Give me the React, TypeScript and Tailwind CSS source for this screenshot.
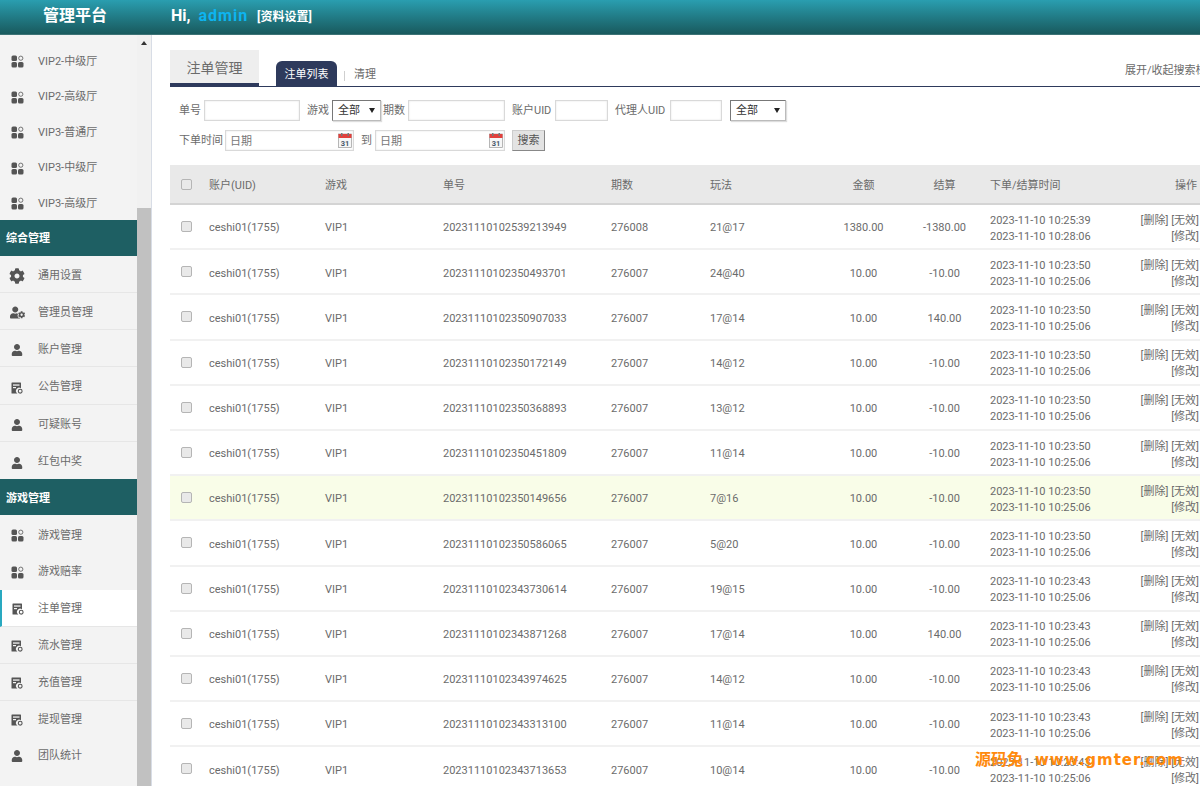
import { FaCog, FaUser, FaUserCog } from "react-icons/fa";

const font = "font-['Roboto','Noto_Sans_CJK_SC',sans-serif]";

function GridIcon() {
  return (
    <svg width="13" height="13" viewBox="0 0 13 13" className="text-[#555]">
      <rect x="0.5" y="0.5" width="5.5" height="5.5" rx="1.5" fill="currentColor" />
      <circle cx="9.8" cy="3.2" r="2.1" fill="none" stroke="currentColor" strokeWidth="0.8" />
      <rect x="0.5" y="7" width="5.5" height="5.5" rx="1.5" fill="currentColor" />
      <rect x="7" y="7" width="5.5" height="5.5" rx="1.5" fill="currentColor" />
    </svg>
  );
}

function DocIcon() {
  return (
    <svg width="12" height="12" viewBox="0 0 12 12" className="text-[#555]">
      <path d="M0.5 1a.5.5 0 0 1 .5-.5h8.5a.5.5 0 0 1 .5.5v5.2a3 3 0 0 0-3.6 5.3H1a.5.5 0 0 1-.5-.5z" fill="currentColor" />
      <rect x="2" y="2.4" width="6.5" height="1.3" fill="#f3f3f3" />
      <rect x="2" y="5" width="3" height="1.2" fill="#f3f3f3" />
      <circle cx="9.2" cy="9.2" r="1.9" fill="none" stroke="currentColor" strokeWidth="1.1" />
    </svg>
  );
}

function CalendarIcon() {
  return (
    <svg width="14" height="15" viewBox="0 0 14 15">
      <rect x="0.5" y="1" width="13" height="13.5" fill="#f6f6f6" stroke="#999" strokeWidth="0.7" />
      <rect x="0.5" y="1" width="13" height="4" fill="#e2403c" />
      <rect x="3" y="0" width="1.5" height="3" fill="#777" />
      <rect x="9.5" y="0" width="1.5" height="3" fill="#777" />
      <text x="7" y="12.6" textAnchor="middle" fontSize="7.5" fontWeight="700" fill="#46586a">31</text>
    </svg>
  );
}

type IconKind = "grid" | "doc" | "user" | "cog" | "admin";

function NavIcon({ kind }: { kind: IconKind }) {
  if (kind === "grid") return <GridIcon />;
  if (kind === "doc") return <DocIcon />;
  if (kind === "cog") return <FaCog className="text-[#555] text-[16px]" />;
  if (kind === "admin") return <FaUserCog className="text-[#555] text-[15px]" />;
  return <FaUser className="text-[#555] text-[12px]" />;
}

function NavItem({ label, icon, active, line = true, h = "h-[37.3px]", pt = "pt-[4px]" }: { label: string; icon: IconKind; active?: boolean; line?: boolean; h?: string; pt?: string }) {
  return (
    <div className={`${h} ${pt} flex items-center shrink-0 ${line ? "border-b border-[#e6e6e6]" : ""} ${active ? "bg-white border-l-2 border-l-[#29a9c0]" : ""}`}>
      <div className={`${active ? "w-[36px]" : "w-[38px]"} flex justify-center pr-[4px]`}>
        <NavIcon kind={icon} />
      </div>
      <span className="text-[11px] text-[#6b6b6b]">{label}</span>
    </div>
  );
}

function Section({ label }: { label: string }) {
  return (
    <div className="h-[36px] shrink-0 bg-[#1e5f63] text-white text-[11px] font-bold flex items-center pl-[6px] pt-[3px]">{label}</div>
  );
}

function Sidebar() {
  return (
    <div className="w-[152px] shrink-0 flex border-r border-[#d8dde6] h-full overflow-hidden">
      <div className="w-[137px] bg-[#f3f3f3] pt-[7px] flex flex-col h-full overflow-hidden">
        {["VIP2-中级厅", "VIP2-高级厅", "VIP3-普通厅", "VIP3-中级厅", "VIP3-高级厅"].map((t) => (
          <NavItem key={t} label={t} icon="grid" line={false} h="h-[35.5px]" />
        ))}
        <Section label="综合管理" />
        <NavItem label="通用设置" icon="cog" pt="pt-[5px]" />
        <NavItem label="管理员管理" icon="admin" />
        <NavItem label="账户管理" icon="user" />
        <NavItem label="公告管理" icon="doc" />
        <NavItem label="可疑账号" icon="user" />
        <NavItem label="红包中奖" icon="user" line={false} />
        <Section label="游戏管理" />
        <NavItem label="游戏管理" icon="grid" line={false} />
        <NavItem label="游戏赔率" icon="grid" line={false} pt="pt-[2px]" />
        <NavItem label="注单管理" icon="doc" active h="h-[37px]" pt="pt-[2px]" />
        <NavItem label="流水管理" icon="doc" h="h-[37px]" pt="pt-[2px]" />
        <NavItem label="充值管理" icon="doc" h="h-[37px]" pt="pt-[2px]" />
        <NavItem label="提现管理" icon="doc" line={false} h="h-[37px]" pt="pt-[2px]" />
        <NavItem label="团队统计" icon="user" line={false} h="h-[36px]" pt="pt-0" />
        <NavItem label="一级统计" icon="user" line={false} />
      </div>
      <div className="w-[14px] bg-[#f1f1f1] flex flex-col items-center h-full">
        <div className="h-[173px] w-full flex justify-center pt-[6px]">
          <div className="w-0 h-0 border-x-[3.5px] border-x-transparent border-b-[4px] border-b-[#333]" />
        </div>
        <div className="flex-1 w-full bg-[#c1c1c1]" />
      </div>
    </div>
  );
}

function Field({ w, placeholder }: { w: string; placeholder?: string }) {
  return (
    <input
      placeholder={placeholder}
      className={`${w} block h-[21px] border border-[#d9d9d9] shadow-[inset_0_0_2px_#e0e0e0] text-[11px] px-[4px] pt-[2px] outline-none placeholder:text-[#777] bg-white`}
    />
  );
}

function Select({ w }: { w: string }) {
  return (
    <div className={`${w} h-[21px] relative`}>
      <select className="block w-full h-full appearance-none border border-[#bbb] border-t-[#777] border-l-[#777] bg-white text-[11px] text-[#333] pl-[5px] pt-[2px] outline-none rounded-none shadow-[1px_1px_1px_#ddd]">
        <option>全部</option>
      </select>
      <div className="absolute right-[6px] top-[8px] w-0 h-0 border-x-[3px] border-x-transparent border-t-[5px] border-t-[#222]" />
    </div>
  );
}

function DateField({ w }: { w: string }) {
  return (
    <div className={`${w} h-[21px] relative`}>
      <Field w="w-full" placeholder="日期" />
      <div className="absolute right-[2px] top-[3px]">
        <CalendarIcon />
      </div>
    </div>
  );
}

function Label({ children, w }: { children: string; w: string }) {
  return <span className={`${w} shrink-0 pt-[2px] text-[11px] text-[#6b6b6b] whitespace-nowrap`}>{children}</span>;
}

const rows = [
  ["20231110102539213949", "276008", "21@17", "1380.00", "-1380.00", "2023-11-10 10:25:39", "2023-11-10 10:28:06"],
  ["20231110102350493701", "276007", "24@40", "10.00", "-10.00", "2023-11-10 10:23:50", "2023-11-10 10:25:06"],
  ["20231110102350907033", "276007", "17@14", "10.00", "140.00", "2023-11-10 10:23:50", "2023-11-10 10:25:06"],
  ["20231110102350172149", "276007", "14@12", "10.00", "-10.00", "2023-11-10 10:23:50", "2023-11-10 10:25:06"],
  ["20231110102350368893", "276007", "13@12", "10.00", "-10.00", "2023-11-10 10:23:50", "2023-11-10 10:25:06"],
  ["20231110102350451809", "276007", "11@14", "10.00", "-10.00", "2023-11-10 10:23:50", "2023-11-10 10:25:06"],
  ["20231110102350149656", "276007", "7@16", "10.00", "-10.00", "2023-11-10 10:23:50", "2023-11-10 10:25:06"],
  ["20231110102350586065", "276007", "5@20", "10.00", "-10.00", "2023-11-10 10:23:50", "2023-11-10 10:25:06"],
  ["20231110102343730614", "276007", "19@15", "10.00", "-10.00", "2023-11-10 10:23:43", "2023-11-10 10:25:06"],
  ["20231110102343871268", "276007", "17@14", "10.00", "140.00", "2023-11-10 10:23:43", "2023-11-10 10:25:06"],
  ["20231110102343974625", "276007", "14@12", "10.00", "-10.00", "2023-11-10 10:23:43", "2023-11-10 10:25:06"],
  ["20231110102343313100", "276007", "11@14", "10.00", "-10.00", "2023-11-10 10:23:43", "2023-11-10 10:25:06"],
  ["20231110102343713653", "276007", "10@14", "10.00", "-10.00", "2023-11-10 10:23:43", "2023-11-10 10:25:06"],
];

const cols = "grid grid-cols-[39px_116px_118px_168px_99px_113px_81px_81px_125px_90px] items-center";

function Check() {
  return <input type="checkbox" className="appearance-none block w-[11px] h-[11px] ml-[11px] -mt-[4px] border border-[#b5b5b5] rounded-[2px] bg-[#e9e9e9]" />;
}

function Table() {
  return (
    <div className="w-[1030px] mt-[14px] text-[11px] text-[#6b6b6b]">
      <div className={`${cols} h-[40px] pt-[4px] bg-[#e9e9e9] border-b-2 border-[#d4d4d4]`}>
        <Check />
        <span>账户(UID)</span>
        <span>游戏</span>
        <span>单号</span>
        <span>期数</span>
        <span>玩法</span>
        <span className="text-center">金额</span>
        <span className="text-center">结算</span>
        <span className="pl-[5px]">下单/结算时间</span>
        <span className="text-right pr-[3px]">操作</span>
      </div>
      {rows.map((r, i) => (
        <div key={r[0]} className={`${cols} h-[45.2px] pt-[4px] border-b-2 border-[#f1f1f1] ${i === 6 ? "bg-[#f9fde8]" : ""}`}>
          <Check />
          <span>ceshi01(1755)</span>
          <span>VIP1</span>
          <span>{r[0]}</span>
          <span>{r[1]}</span>
          <span>{r[2]}</span>
          <span className="text-center">{r[3]}</span>
          <span className="text-center">{r[4]}</span>
          <div className="pl-[5px] leading-[16px] whitespace-nowrap">
            <div>{r[5]}</div>
            <div>{r[6]}</div>
          </div>
          <div className="text-right leading-[16px] pr-[1px] whitespace-nowrap">
            <div>[删除] [无效]</div>
            <div>[修改]</div>
          </div>
        </div>
      ))}
    </div>
  );
}

export default function App() {
  return (
    <div className={`${font} w-[1200px] h-[786px] overflow-hidden flex flex-col bg-white relative`}>
      <header className="h-[35px] shrink-0 bg-gradient-to-b from-[#2a9eb0] to-[#195a5e] flex items-center text-white border-b border-[#3c7376] pb-[2px]">
        <div className="w-[150px] text-center text-[16px] font-bold">管理平台</div>
        <div className="ml-[21px] flex items-center">
          <span className="text-[16px] font-bold">Hi,</span>
          <span className="text-[16px] font-bold text-[#0db4f0] ml-[8px] tracking-[1px]">admin</span>
          <span className="text-[12px] font-bold ml-[9px] pt-[1px]">[资料设置]</span>
        </div>
      </header>
      <div className="flex flex-1 min-h-0">
        <Sidebar />
        <main className="flex-1 min-w-0 overflow-hidden pl-[18px] pt-[15px]">
          <div className="flex items-end h-[37px] w-[1048px] border-b border-[#2e3a5c] relative">
            <div className="w-[89px] h-full bg-[#eeeeee] border-b-[3px] border-[#2e3a5c] pt-[3px] text-[14px] text-[#6b6b6b] flex items-center justify-center">注单管理</div>
            <div className="ml-[17px] w-[61px] h-[25px] pt-[3px] bg-[#2e3a5c] rounded-t-[6px] text-white text-[11px] flex items-center justify-center">注单列表</div>
            <span className="ml-[7px] mb-[5px] h-[10px] w-px bg-[#cfcfcf]" />
            <span className="ml-[9px] mb-[3px] text-[11px] text-[#6b6b6b]">清理</span>
            <span className="absolute left-[955px] top-[13px] text-[11px] text-[#6b6b6b] whitespace-nowrap">展开/收起搜索栏</span>
          </div>
          <div className="pl-[9px] pt-[13px] flex flex-col gap-[9px]">
            <div className="flex items-center h-[21px]">
              <Label w="w-[25px]">单号</Label>
              <Field w="w-[96px]" />
              <Label w="w-[25px] pl-[7px] box-content">游戏</Label>
              <Select w="w-[49px]" />
              <Label w="w-[27px] pl-[2px]">期数</Label>
              <Field w="w-[97px]" />
              <Label w="w-[43px] pl-[7px] box-content">账户UID</Label>
              <Field w="w-[53px]" />
              <Label w="w-[55px] pl-[7px] box-content">代理人UID</Label>
              <Field w="w-[52px]" />
              <div className="ml-[8px]">
                <Select w="w-[56px]" />
              </div>
            </div>
            <div className="flex items-center h-[21px]">
              <Label w="w-[46px]">下单时间</Label>
              <DateField w="w-[129px]" />
              <Label w="w-[14px] pl-[7px] box-content">到</Label>
              <DateField w="w-[130px]" />
              <button className="ml-[7px] w-[33px] h-[21px] pt-[2px] bg-[#e3e3e3] border border-[#ccc] border-r-[#888] border-b-[#888] text-[11px] text-[#555]">搜索</button>
            </div>
          </div>
          <Table />
        </main>
      </div>
      <div className="absolute left-[975px] top-[748px] text-[16px] font-bold text-[#ff8a0d] whitespace-nowrap flex items-center">
        <span>源码兔</span>
        <span className="ml-[12px] font-['DejaVu_Sans',sans-serif] text-[15px] tracking-[1px]">www.gmter.com</span>
      </div>
    </div>
  );
}
